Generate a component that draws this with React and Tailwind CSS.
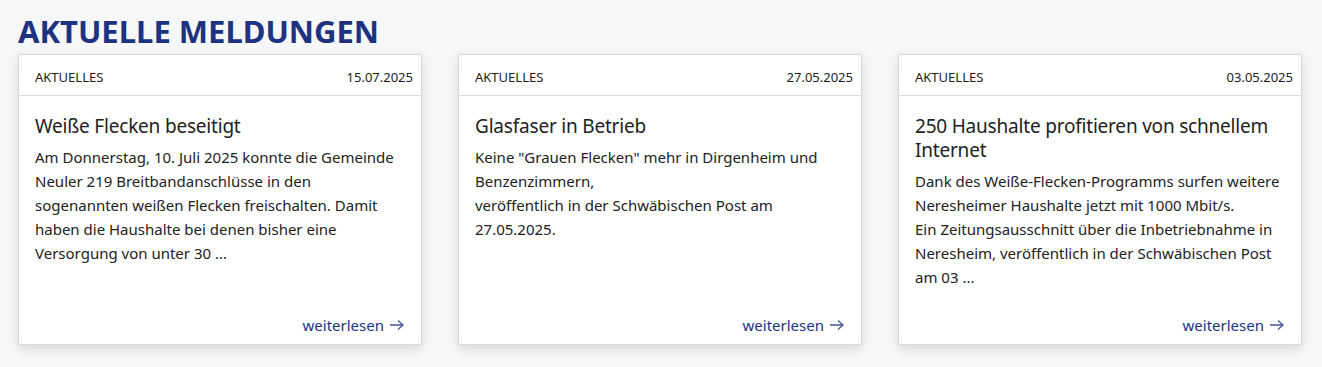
import React from "react";

const news = [
  {
    date: "15.07.2025",
    title: "Weiße Flecken beseitigt",
    text: [
      "Am Donnerstag, 10. Juli 2025 konnte die Gemeinde Neuler 219 Breitbandanschlüsse in den sogenannten weißen Flecken freischalten. Damit haben die Haushalte bei denen bisher eine Versorgung von unter 30 ...",
    ],
  },
  {
    date: "27.05.2025",
    title: "Glasfaser in Betrieb",
    text: [
      'Keine "Grauen Flecken" mehr in Dirgenheim und Benzenzimmern,',
      "veröffentlich in der Schwäbischen Post am 27.05.2025.",
    ],
  },
  {
    date: "03.05.2025",
    title: "250 Haushalte profitieren von schnellem Internet",
    text: [
      "Dank des Weiße-Flecken-Programms surfen weitere Neresheimer Haushalte jetzt mit 1000 Mbit/s.",
      "Ein Zeitungsausschnitt über die Inbetriebnahme in Neresheim, veröffentlich in der Schwäbischen Post am 03 ...",
    ],
  },
];

const Arrow = () => (
  <svg width="16" height="12" viewBox="0 0 16 12" fill="none" className="ml-[5px]">
    <path d="M1 6h13M9 1.5 14 6l-5 4.5" stroke="#4a5a9a" strokeWidth="1.3" />
  </svg>
);

const Card = ({ item }) => (
  <div className="flex flex-col bg-white border border-[#d9d9d9] shadow-[0_4px_10px_rgba(0,0,0,0.12)]">
    <div className="flex items-center justify-between h-[41px] pt-[5px] px-4 border-b border-[#dedede] text-[13px] text-[#222]">
      <span>AKTUELLES</span>
      <span className="-mr-[8px]">{item.date}</span>
    </div>
    <div className="px-4 pt-[18px]">
      <h3 className="text-[19px] leading-6 tracking-[-0.2px] text-[#222]">{item.title}</h3>
      <div className="mt-[7px] text-[15px] leading-6 text-[#222]">
        {item.text.map((t, i) => (
          <p key={i}>{t}</p>
        ))}
      </div>
    </div>
    <div className="mt-auto flex items-center justify-end pl-4 pr-[16px] pt-6 pb-[7px]">
      <a className="flex items-center text-[15px] leading-6 text-[#1d3381]" href="#">
        weiterlesen
        <Arrow />
      </a>
    </div>
  </div>
);

export default function App() {
  return (
    <div
      className="min-h-[367px] bg-[#f6f7f9] px-[18px] pt-[8px] pb-6"
      style={{ fontFamily: '"Noto Sans", sans-serif' }}
    >
      <h2 className="text-[31px] leading-[46px] font-bold text-[#1d3381]">AKTUELLE MELDUNGEN</h2>
      <div className="grid grid-cols-3 gap-[36px] w-[1284px]">
        {news.map((n) => (
          <Card key={n.date} item={n} />
        ))}
      </div>
    </div>
  );
}
